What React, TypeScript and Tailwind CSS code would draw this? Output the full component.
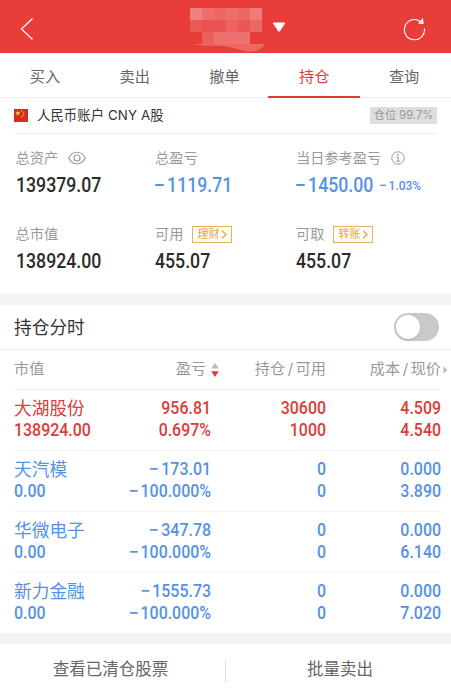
import { ReactElement } from 'react';
import clsx from 'clsx';

const TABS = ['买入', '卖出', '撤单', '持仓', '查询'];
const ACTIVE_TAB = '持仓';

type Position = {
  name: string;
  value: string;
  profit: string;
  percent: string;
  amount: string;
  available: string;
  cost: string;
  price: string;
  up?: boolean;
};

const POSITIONS: Position[] = [
  { name: '大湖股份', value: '138924.00', profit: '956.81', percent: '0.697%', amount: '30600', available: '1000', cost: '4.509', price: '4.540', up: true },
  { name: '天汽模', value: '0.00', profit: '−173.01', percent: '−100.000%', amount: '0', available: '0', cost: '0.000', price: '3.890' },
  { name: '华微电子', value: '0.00', profit: '−347.78', percent: '−100.000%', amount: '0', available: '0', cost: '0.000', price: '6.140' },
  { name: '新力金融', value: '0.00', profit: '−1555.73', percent: '−100.000%', amount: '0', available: '0', cost: '0.000', price: '7.020' },
];

// opacity classes of the hidden account name, 6 x 3 cells
const MASK = [
  'bg-white/35', 'bg-white/25', 'bg-white/22', 'bg-white/25', 'bg-white/22', 'bg-white/33',
  'bg-white/15', 'bg-white/12', 'bg-white/12', 'bg-white/20', 'bg-white/14', 'bg-white/22',
  'bg-white/0', 'bg-white/18', 'bg-white/27', 'bg-white/26', 'bg-white/26', 'bg-white/0',
];

const Header = (): ReactElement => (
  <header className="relative flex h-[53px] items-center justify-between bg-[#e83d38] pr-[25px] pl-5">
    <svg className="mt-1 h-6 w-3.5" viewBox="0 0 14 24" fill="none" stroke="#fff" strokeWidth="1.2">
      <path d="M12.5 1.5 1.5 12l11 10.5" />
    </svg>
    <div className="absolute top-2 left-[190px]">
      <div className="grid grid-cols-6">
        {MASK.map((cell, i) => (
          <span key={i} className={clsx('h-3 w-3', cell)} />
        ))}
      </div>
      <svg className="absolute top-[35px] left-[3px] h-[9px] w-[73px]" viewBox="0 0 73 9" fill="#fff" fillOpacity=".22">
        <path d="M0 1h72C70 5 65 8.500 58 8.500 48 8.500 44 5 33 3.500 22 2.200 8 3.500 0 1Z" />
      </svg>
    </div>
    <svg className="absolute top-[22px] left-[272px] h-[10px] w-[14px]" viewBox="0 0 14 10" fill="#fff">
      <path d="M1.500.5h11q1 0 .5 1L8 9q-1 1-2 0L1 1.500q-.5-1 .5-1Z" />
    </svg>
    <svg className="mt-1.5 h-[23px] w-[23px]" viewBox="0 0 23 23" fill="none" stroke="#fff" strokeWidth="1.100">
      <path d="M21.500 10.500A10.100 10.100 0 1 1 17 3.200" />
      <path d="M19.500 1.200 20 5.300l-4-.2Z" fill="#fff" />
    </svg>
  </header>
);

const Tabs = (): ReactElement => (
  <nav className="grid h-[45px] grid-cols-5 border-b border-[#ececec] pr-[2px] text-[15.200px]">
    {TABS.map((tab) => (
      <div
        key={tab}
        className={clsx(
          '-mx-px -mb-px flex items-center justify-center border-b-2 pt-[5px]',
          tab === ACTIVE_TAB ? 'border-[#dc3c3a] text-[#dc3c3a]' : 'border-transparent text-[#666]',
        )}
      >
        {tab}
      </div>
    ))}
  </nav>
);

const Flag = (): ReactElement => (
  <svg className="h-[13px] w-[14px]" viewBox="0 0 14 13">
    <path fill="#d82b22" d="M0 0h14v13H0z" />
    <path fill="#ffd83b" d="m3.800 1.600.7 1.700h1.900L4.900 4.500l.6 1.900-1.700-1.100-1.700 1.100.6-1.900L1.200 3.300h1.900Z" />
    <g fill="#f5b23a">
      <circle cx="7.700" cy="1.800" r=".8" />
      <circle cx="9.600" cy="3.600" r=".8" />
      <circle cx="9.600" cy="5.900" r=".8" />
      <circle cx="7.700" cy="7.800" r=".8" />
    </g>
  </svg>
);

const Eye = (): ReactElement => (
  <svg className="ml-2.5 h-[14px] w-[18px]" viewBox="0 0 18 14" fill="none" stroke="#999" strokeWidth="1.100">
    <path d="M.7 7C2.500 3.200 5.500 1.200 9 1.200S15.500 3.200 17.300 7C15.500 10.800 12.500 12.800 9 12.800S2.500 10.800.7 7Z" />
    <circle cx="9" cy="7" r="3" />
  </svg>
);

const Info = (): ReactElement => (
  <svg className="ml-2.5 h-[14px] w-[14px]" viewBox="0 0 14 14" fill="none" stroke="#999">
    <circle cx="7" cy="7" r="6.200" />
    <path d="M5.500 6H7.200v4.200M5.300 10.200h3.600" />
    <circle cx="7" cy="3.800" r=".5" fill="#999" />
  </svg>
);

const Badge = ({ text }: { text: string }): ReactElement => (
  <span className="ml-[9px] flex h-[17px] w-10 items-center justify-center gap-0.5 border border-[#eab05a] text-[11px] text-[#e8a23c]">
    {text}
    <svg className="h-[9px] w-[6px]" viewBox="0 0 6 9" fill="none" stroke="#e8a23c" strokeWidth="1.200">
      <path d="m1 .7 4 3.800-4 3.800" />
    </svg>
  </span>
);

// the minus sign is wider than the one of the digits' font
const Amount = ({ text }: { text: string }): ReactElement => {
  const negative = text.startsWith('−');
  return (
    <span className="inline-flex">
      {negative && <span className="mr-[0.12em] inline-block origin-right scale-x-[1.15]">−</span>}
      {negative ? text.slice(1) : text}
    </span>
  );
};

type MetricProps = {
  label: string;
  value: string;
  extra?: ReactElement;
  note?: string;
  blue?: boolean;
};

const Metric = ({ label, value, extra, note, blue }: MetricProps): ReactElement => (
  <div>
    <div className="flex h-5 items-center text-[14.200px] whitespace-nowrap text-[#999]">
      {label}
      {extra}
    </div>
    <div
      className={clsx(
        'mt-[5px] flex h-6 origin-left scale-x-[.885] items-center font-[Roboto] text-[20px] font-medium whitespace-nowrap',
        blue ? 'text-[#5592e6]' : 'text-[#2b2b2b]',
      )}
    >
      <Amount text={value} />
      {note && (
        <span className="ml-2 text-[13.500px]">
          <Amount text={note} />
        </span>
      )}
    </div>
  </div>
);

const Summary = (): ReactElement => (
  <section className="h-[196px]">
    <div className="mx-[14px] flex h-[36px] items-center border-b border-[#f1f1f1] text-[13.300px] text-[#333]">
      <Flag />
      <span className="ml-[9px] pt-px tracking-[0.12px]">人民币账户 CNY A股</span>
      <span className="ml-auto flex h-[17px] w-[67px] items-center justify-center bg-[#dedede] text-[11.200px] text-[#999]">
        仓位 99.7%
      </span>
    </div>
    <div className="grid grid-cols-[139.500px_141px_1fr] gap-y-[27px] pt-[14px] pl-[15.500px]">
      <Metric label="总资产" value="139379.07" extra={<Eye />} />
      <Metric label="总盈亏" value="−1119.71" blue />
      <Metric label="当日参考盈亏" value="−1450.00" note="−1.03%" extra={<Info />} blue />
      <Metric label="总市值" value="138924.00" />
      <Metric label="可用" value="455.07" extra={<Badge text="理财" />} />
      <Metric label="可取" value="455.07" extra={<Badge text="转账" />} />
    </div>
  </section>
);

const ROW = 'ml-[14px] mr-[10px] grid grid-cols-[96px_101px_115px_115px]';

const PositionRow = ({ position: p, last }: { position: Position; last: boolean }): ReactElement => {
  const numbers = [
    [p.profit, p.percent],
    [p.amount, p.available],
    [p.cost, p.price],
  ];
  return (
    <div
      className={clsx(
        ROW,
        'content-start pt-[7px]',
        last ? 'h-[60px]' : 'h-[61px] border-b border-[#f3f3f3]',
        p.up ? 'text-[#dc3c3a]' : 'text-[#5592e6]',
      )}
    >
      <div>
        <div className="h-[22px] pt-px text-[17.700px] leading-[22px] whitespace-nowrap">{p.name}</div>
        <div className="h-[22px] origin-left scale-x-[.91] font-[Roboto] text-[17.500px] leading-[22px] font-medium">{p.value}</div>
      </div>
      {numbers.map((pair, i) => (
        <div key={i} className="origin-right scale-x-[.91] text-right font-[Roboto] text-[17.500px] leading-[22px] font-medium">
          <div className="h-[22px]"><Amount text={pair[0]} /></div>
          <div className="h-[22px]"><Amount text={pair[1]} /></div>
        </div>
      ))}
    </div>
  );
};

const Positions = (): ReactElement => (
  <section>
    <div className="flex h-[45px] items-center justify-between border-b border-[#f0f0f0] pr-3 pl-[14px]">
      <h2 className="pt-[3px] text-[17.700px] text-[#333]">持仓分时</h2>
      <div className="flex h-7 w-[45px] items-center rounded-full bg-[#c9c9c9] p-0.5">
        <span className="h-6 w-6 rounded-full bg-white shadow-sm" />
      </div>
    </div>
    <div className={clsx(ROW, 'relative h-[40px] items-center border-b border-[#f0f0f0] text-right text-[15.200px] whitespace-nowrap text-[#999]')}>
      <span className="text-left">市值</span>
      <span className="pr-[5px]">盈亏</span>
      <span>持仓<span className="mx-[2.500px]">/</span>可用</span>
      <span>成本<span className="mx-[2.500px]">/</span>现价</span>
      <svg className="absolute top-3 left-[197px] h-4 w-2" viewBox="0 0 8 16">
        <path fill="#bbb" d="m4 1 3.800 5.500H.2Z" />
        <path fill="#dc3c3a" d="M4 15 .2 9.300h7.600Z" />
      </svg>
      <svg className="absolute top-4 -right-[7px] h-2 w-[5px]" viewBox="0 0 5 8" fill="#bbb">
        <path d="m.5.5 4 3.500-4 3.500Z" />
      </svg>
    </div>
    {POSITIONS.map((position, i) => (
      <PositionRow key={position.name} position={position} last={i === POSITIONS.length - 1} />
    ))}
  </section>
);

export default function App(): ReactElement {
  return (
    <main className="h-[688px] w-[451px] overflow-hidden bg-white font-[Inter,'Noto_Sans_CJK_SC',sans-serif]">
      <Header />
      <Tabs />
      <Summary />
      <div className="h-[11px] bg-[#f4f4f4]" />
      <Positions />
      <div className="h-[11px] bg-[#f4f4f4]" />
      <footer className="flex h-[50px] items-center text-center text-[16.500px] text-[#666]">
        <span className="w-[225px] pr-1">查看已清仓股票</span>
        <span className="mt-1 h-[22px] w-px bg-[#ddd]" />
        <span className="flex-1 pl-[3px]">批量卖出</span>
      </footer>
    </main>
  );
}
